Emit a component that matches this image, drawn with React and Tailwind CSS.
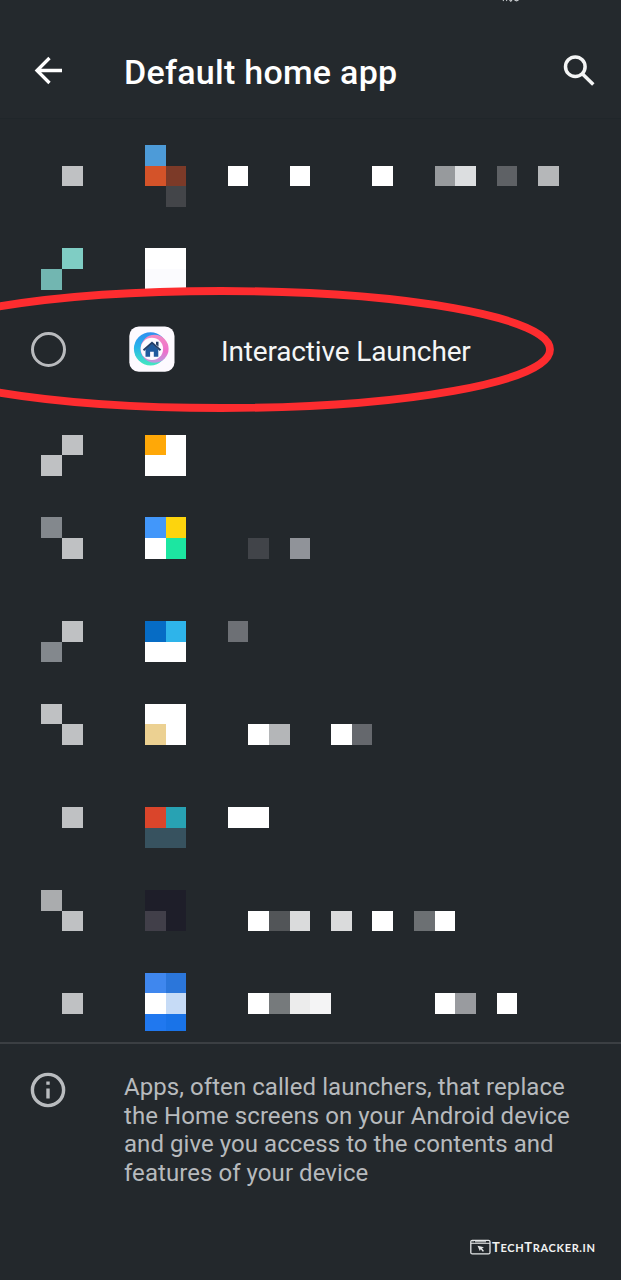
import React from "react";

const W = "#ffffff";
const G = "#bfc1c3";
const M = "#83888d";
const _ = null;

// Each entry holds the tile rows of an obscured radio button, app icon and label.
const before = [
  {
    radio: [[_, _], [_, G], [_, _]],
    icon: [["#4d9bd8", _], ["#d45329", "#7c3a28"], [_, "#434549"]],
    label: [[], [W, _, _, W, _, _, _, W, _, _, "#979a9d", "#dcdee0", _, "#5e6165", _, "#b5b7b9"], []],
    gap: "mb-[41.4px]",
  },
  {
    radio: [[_, "#7fcdc4"], ["#72b6b1", _]],
    icon: [[W, W], ["#fbfbfe", "#fbfbfe"]],
    label: [],
    gap: "",
  },
];

const after = [
  { radio: [[_, G], [G, _]], icon: [["#ffa807", W], [W, W]], label: [], gap: "mb-[41.4px]" },
  {
    radio: [[M, _], [_, G]],
    icon: [["#4297fa", "#fdd40d"], [W, "#1ce6a1"]],
    label: [[], [_, "#414449", _, "#909399"]],
    gap: "mb-[62.1px]",
  },
  {
    radio: [[_, G], [M, _]],
    icon: [["#066cc5", "#2eb4ea"], [W, W]],
    label: [["#6d7075"], []],
    gap: "mb-[41.4px]",
  },
  {
    radio: [[G, _], [_, G]],
    icon: [[W, W], ["#ecd192", W]],
    label: [[], [_, W, "#b4b6b8", _, _, W, "#65686d"]],
    gap: "mb-[62.1px]",
  },
  {
    radio: [[_, G], [_, _]],
    icon: [["#da452b", "#28a2b3"], ["#37525f", "#37525f"]],
    label: [[W, W], []],
    gap: "mb-[41.4px]",
  },
  {
    radio: [["#aaacae", _], [_, G]],
    icon: [["#1e1e29", "#1e1e29"], ["#413f49", "#1e1e29"]],
    label: [[], [_, W, "#525558", "#dadbdc", _, "#dadbdc", _, W, _, "#6c7073", W]],
    gap: "mb-[41.4px]",
  },
  {
    radio: [[_, _], [_, G], [_, _]],
    icon: [["#3f87ee", "#2b76da"], [W, "#c6dbf6"], ["#2078ef", "#1973e8"]],
    label: [[], [_, W, "#767a7c", "#ececec", "#f4f4f5", _, _, _, _, _, W, "#999b9f", _, W], []],
    gap: "",
    short: true,
  },
];

function Tiles({ rows, short }) {
  return (
    <div className="flex flex-col">
      {rows.map((row, r) => (
        <div key={r} className={short && r === 2 ? "flex h-[16.7px]" : "flex h-[20.7px]"}>
          {row.map((color, c) => (
            <span key={c} className="w-[20.7px] shrink-0" style={{ backgroundColor: color ?? "transparent" }} />
          ))}
        </div>
      ))}
    </div>
  );
}

function HiddenApp({ app }) {
  return (
    <li className={`flex pl-[41.4px] ${app.gap}`}>
      <div className="mr-[62.1px]">
        <Tiles rows={app.radio} short={app.short} />
      </div>
      <div className="mr-[41.4px]">
        <Tiles rows={app.icon} short={app.short} />
      </div>
      <Tiles rows={app.label} short={app.short} />
    </li>
  );
}

function LauncherIcon() {
  return (
    <svg className="h-[46px] w-[46px]" viewBox="0 0 46 46">
      <defs>
        <linearGradient id="cool" x1="0" y1="0" x2="0" y2="1">
          <stop offset="0" stopColor="#2f8ff0" />
          <stop offset="0.45" stopColor="#27b4ea" />
          <stop offset="1" stopColor="#45e8c0" />
        </linearGradient>
        <linearGradient id="warm" x1="0" y1="0" x2="0" y2="1">
          <stop offset="0" stopColor="#f28bc4" />
          <stop offset="0.6" stopColor="#ee70cb" />
          <stop offset="1" stopColor="#b79ce0" />
        </linearGradient>
      </defs>
      <rect x="0.3" y="0.5" width="45.2" height="45.2" rx="9.5" fill="#fdfaff" />
      <circle cx="21.5" cy="22.8" r="16.6" fill="url(#cool)" />
      <circle cx="25.6" cy="22.8" r="14" fill="url(#warm)" />
      <circle cx="22.9" cy="22.9" r="11.2" fill="#fdfaff" />
      <path d="M16.5 23.5 23 17.5l6.3 6v7.2h-4.5v-5h-3.7v5h-4.6z" fill="#205a9d" />
      <path d="M14.5 24.2 23 16.7l8.5 7.5" fill="none" stroke="#233e68" strokeWidth="1.9" />
      <path d="M27 15.8h2.5v5L27 18.6z" fill="#233e68" />
    </svg>
  );
}

export default function App() {
  return (
    <main className="flex h-[1280px] w-[621px] flex-col overflow-hidden bg-[#23282c] font-['Roboto',sans-serif]">
      <header className="flex h-[119px] shrink-0 flex-col border-b border-[#20262a] bg-[#24292d]">
        <svg className="ml-[500px] h-[3px] w-[24px]" viewBox="0 0 24 3" fill="none" stroke="#c9cccf" strokeWidth="1.3">
          <path d="M1 0 2 1M5 0l1 1M9 0l1.5 1.5L12 0M15 0l2.5 1L20 0" />
        </svg>
        <div className="flex h-[136px] items-center pt-[20px]">
          <svg className="mt-[2px] ml-[34px] h-[30px] w-[30px]" viewBox="0 0 30 30" fill="none" stroke="#fff" strokeWidth="3.3">
            <path d="M28 14.5H3M15.5 2 3 14.5 15.5 27" />
          </svg>
          <h1 className="ml-[60px] w-[420px] pt-[3px] text-[34px] leading-[40px] font-medium tracking-[0.27px] whitespace-nowrap text-white">
            Default home app
          </h1>
          <svg className="ml-[19px] h-[32px] w-[32px] shrink-0" viewBox="0 0 32 32" fill="none" stroke="#f4f5f5" strokeWidth="3.5">
            <circle cx="12.3" cy="12.7" r="9.8" />
            <path d="m19.3 19.7 11 10.8" />
          </svg>
        </div>
      </header>

      <ul className="flex h-[923px] shrink-0 flex-col pt-[25.9px]">
        {before.map((app, i) => (
          <HiddenApp key={i} app={app} />
        ))}
        <li className="relative flex h-[144.9px] shrink-0 items-center pb-[26px]">
          <span className="ml-[31px] h-[35px] w-[35px] rounded-full border-[3px] border-[#b9bbbe]" />
          <span className="ml-[63px]">
            <LauncherIcon />
          </span>
          <span className="ml-[46px] pt-[6px] text-[28px] leading-[34px] tracking-[-0.15px] whitespace-nowrap text-[#f5f6f6]">
            Interactive Launcher
          </span>
          <svg className="absolute top-[-9.8px] left-0 h-[140px] w-[621px]" viewBox="0 280 621 140" fill="none">
            <ellipse cx="221.5" cy="349.5" rx="328.5" ry="58.5" stroke="#fd2c2f" strokeWidth="7.8" />
          </svg>
        </li>
        {after.map((app, i) => (
          <HiddenApp key={i} app={app} />
        ))}
      </ul>

      <section className="flex shrink-0 border-t-2 border-[#3b3f43] pt-[29px]">
        <svg className="mt-[-1px] ml-[30px] h-[36px] w-[36px]" viewBox="0 0 36 36" fill="none" stroke="#b9bcbf" strokeWidth="3.4">
          <circle cx="18" cy="18" r="15.6" />
          <path d="M18 16.5V26.5M18 9.5v3.3" />
        </svg>
        <p className="ml-[58px] text-[24px] leading-[28.5px] tracking-[0.06px] whitespace-nowrap text-[#b7babd]">
          Apps, often called launchers, that replace
          <br />
          the Home screens on your Android device
          <br />
          and give you access to the contents and
          <br />
          features of your device
        </p>
      </section>

      <footer className="mt-auto mb-[21px] flex h-[24px] shrink-0 items-center pl-[470px]">
        <svg className="-mt-px h-[16px] w-[21px]" viewBox="0 0 21 16" fill="none" stroke="#e5e7e8" strokeWidth="1.3">
          <rect x="0.8" y="1.3" width="19.2" height="13.6" rx="1.5" />
          <path d="M1 4.3h19" strokeWidth="1" />
          <path d="M2.5 2.8h1M5 2.8h11" strokeWidth="1" />
          <path d="M7.5 6.8 14 8.2l-2 1 2 2.7-1.2.8-2-2.5-1 1.7z" fill="#e5e7e8" stroke="none" />
        </svg>
        <span className="ml-px font-['Lato',sans-serif] text-[13px] leading-[16px] font-bold tracking-[0.65px] whitespace-nowrap text-[#f1f2f2]">
          T<span className="text-[11px]">ECH</span>T<span className="text-[11px]">RACKER.IN</span>
        </span>
      </footer>
    </main>
  );
}
